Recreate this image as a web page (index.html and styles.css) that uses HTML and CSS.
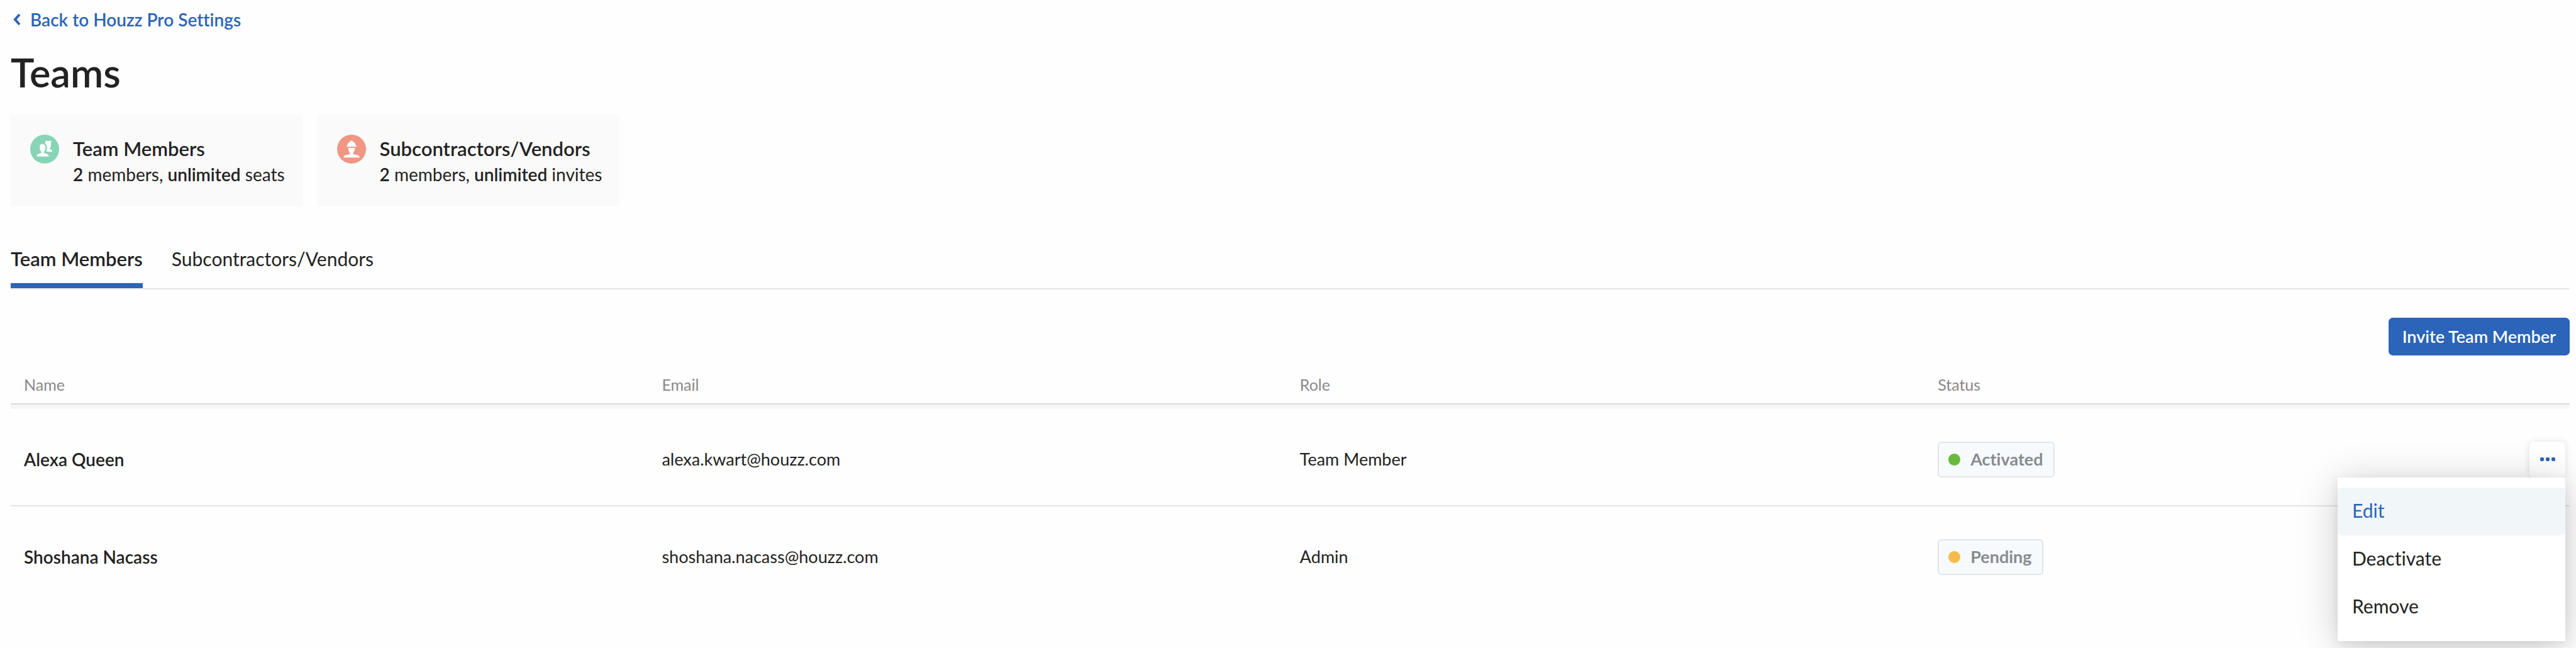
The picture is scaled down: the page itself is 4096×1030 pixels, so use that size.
FILE: index.html
```html
<!DOCTYPE html>
<html lang="en">
<head>
<meta charset="utf-8">
<title>Teams</title>
<link rel="stylesheet" href="styles.css">
</head>
<body>
<main class="page">
  <a class="back" href="#">
    <svg class="back-icon" viewBox="0 0 12 20" aria-hidden="true"><path d="M10 2 3 10l7 8" fill="none" stroke="currentColor" stroke-width="4"/></svg>
    <span>Back to Houzz Pro Settings</span>
  </a>
  <h1 class="title">Teams</h1>

  <section class="cards">
    <article class="card">
      <svg class="card-icon" viewBox="0 0 48 48" aria-hidden="true">
        <circle cx="24" cy="24" r="24" fill="#88d4b6"/>
        <path fill="#fff" d="M25 12.500l1.500-2.500 3 .8 5-.8c.8 1.200 0 2.500-.2 4.500v4.500c-.3 2-1.700 3-1.800 4.200 0 1.200 1.200 1.800 4 2.300v3h-8.500c-.6-1.200-1-1.600-1.200-2.400 1.600-2.600 1.400-6.600.2-9-.6-1.200-1.800-2.200-2.200-2.600z"/>
        <path fill="#fff" d="M16 20c-.5-2 .3-3.500 1.500-3.200.8-1.600 3-1.200 4.500-.6 2 .2 3.600 1.600 3 4.300.6 3-.4 6-2 7.600-.6 1.500 0 2.700 2.400 3.300 3 .7 5 1.200 5.300 4.800H11c.3-3.600 2.200-4.100 5-4.800 2.300-.6 2.800-1.800 2.200-3.300C16.500 26.500 15.500 23 16 20z"/>
      </svg>
      <div class="card-text">
        <h2 class="card-title">Team Members</h2>
        <p class="card-sub"><b>2</b> members, <b>unlimited</b> seats</p>
      </div>
    </article>
    <article class="card">
      <svg class="card-icon" viewBox="0 0 48 48" aria-hidden="true">
        <circle cx="24" cy="24" r="24" fill="#f09683"/>
        <path fill="#fff" d="M17 18.500c0-3.500 2-6 5-6.700V10h4v1.800c3 .7 5 3.200 5 6.700h1.500V20h-17v-1.500z"/>
        <path fill="#fff" d="M18.500 21.800h11c.2 3.400-.9 6.200-2.700 7.700-.5 2 .2 3 2.700 3.500 4 .7 7.700 1.200 8 5H10.500c.3-3.800 4-4.300 8-5 2.500-.5 3.200-1.500 2.700-3.500-1.800-1.500-2.900-4.300-2.700-7.700z"/>
      </svg>
      <div class="card-text">
        <h2 class="card-title">Subcontractors/Vendors</h2>
        <p class="card-sub"><b>2</b> members, <b>unlimited</b> invites</p>
      </div>
    </article>
  </section>

  <nav class="tabs">
    <a class="tab tab-active" href="#">Team Members</a>
    <a class="tab" href="#">Subcontractors/Vendors</a>
  </nav>

  <div class="toolbar"><button class="invite" type="button">Invite Team Member</button></div>

  <table class="members">
    <colgroup><col class="col-main"><col class="col-main"><col class="col-main"><col class="col-status"><col></colgroup>
    <thead>
      <tr><th scope="col">Name</th><th scope="col">Email</th><th scope="col">Role</th><th scope="col">Status</th><th></th></tr>
    </thead>
    <tbody>
      <tr>
        <td class="name">Alexa Queen</td>
        <td>alexa.kwart@houzz.com</td>
        <td>Team Member</td>
        <td><span class="badge"><i class="dot dot-green"></i>Activated</span></td>
        <td class="actions">
          <div class="more-wrap">
            <button class="more" type="button" aria-label="More actions" aria-expanded="true">
              <svg class="more-icon" viewBox="0 0 24 6" aria-hidden="true"><g fill="currentColor"><rect width="6" height="6" x="0" y="0" rx="2"/><rect width="6" height="6" x="9" y="0" rx="2"/><rect width="6" height="6" x="18" y="0" rx="2"/></g></svg>
            </button>
            <div class="menu" role="menu">
              <button class="menu-item menu-item-active" type="button" role="menuitem">Edit</button>
              <button class="menu-item" type="button" role="menuitem">Deactivate</button>
              <button class="menu-item" type="button" role="menuitem">Remove</button>
            </div>
          </div>
        </td>
      </tr>
      <tr>
        <td class="name">Shoshana Nacass</td>
        <td>shoshana.nacass@houzz.com</td>
        <td>Admin</td>
        <td><span class="badge"><i class="dot dot-yellow"></i>Pending</span></td>
        <td></td>
      </tr>
    </tbody>
  </table>
</main>
</body>
</html>
```

FILE: styles.css
```css
* {
  box-sizing: border-box;
}

body {
  margin: 0;
  background: #fefefe;
  color: #222;
  font-family: Lato, "Liberation Sans", sans-serif;
  font-size: 27px;
  font-variant-ligatures: none;
  line-height: 40px;
}

button {
  font-family: inherit;
  font-variant-ligatures: inherit;
  border: 0;
  cursor: pointer;
}

.page {
  min-height: 100vh;
  padding: 13px 10px 0 17px;
}

.back {
  display: flex;
  align-items: center;
  gap: 15px;
  width: fit-content;
  padding-left: 4px;
  color: #2b64b8;
  font-size: 28px;
  font-weight: 600;
  line-height: 36px;
  text-decoration: none;
}

.back-icon {
  width: 12px;
  height: 20px;
}

.title {
  margin: 30px 0 32px;
  font-size: 63px;
  font-weight: 600;
  line-height: 72px;
}

.cards {
  display: flex;
  gap: 24px;
}

.card {
  display: flex;
  gap: 22px;
  padding: 31px 28px 30px 31px;
  background: #fafafa;
}

.card-icon {
  width: 46px;
  height: 46px;
}

.card-text {
  padding-top: 2px;
}

.card-title {
  margin: 0;
  font-size: 31px;
  font-weight: 600;
  line-height: 40px;
}

.card-sub {
  margin: 0;
  font-size: 28px;
  line-height: 42px;
}

.card-sub b {
  font-weight: 600;
}

.tabs {
  display: flex;
  gap: 46px;
  margin-top: 63px;
  border-bottom: 2px solid #e6e6e6;
}

.tab {
  padding-bottom: 19px;
  border-bottom: 8px solid transparent;
  color: inherit;
  font-size: 30px;
  text-decoration: none;
}

.tab-active {
  border-bottom-color: #2b64b8;
  font-size: 31px;
  font-weight: 600;
}

.toolbar {
  display: flex;
  justify-content: flex-end;
  margin-top: 45px;
}

.invite {
  height: 60px;
  padding: 0 22px 2px;
  border-radius: 7px;
  background: #2b64b8;
  color: #fff;
  font-size: 27px;
  font-weight: 600;
}

.members {
  width: 100%;
  border-spacing: 0;
  table-layout: fixed;
}

.col-main {
  width: 24.93%;
}

.col-status {
  width: 20%;
}

.members th {
  padding: 28px 21px 12px;
  border-bottom: 2px solid #dcdcdc;
  box-shadow: 0 7px 0 #f6f6f6;
  color: #888;
  font-size: 25px;
  font-weight: 400;
  line-height: 36px;
  text-align: left;
}

.members td {
  height: 160px;
  padding: 0 21px;
}

.members tbody tr:first-child td {
  height: 162px;
  padding-top: 14px;
  border-bottom: 2px solid #e4e4e4;
}

.members .name {
  font-size: 28px;
  font-weight: 600;
}

.badge {
  display: flex;
  align-items: center;
  gap: 16px;
  width: fit-content;
  height: 57px;
  padding: 0 16px 0 15px;
  border: 2px solid #e2e5e6;
  border-radius: 6px;
  background: #f6fafd;
  color: #888b8d;
  font-weight: 700;
}

.dot {
  width: 19px;
  height: 19px;
  border-radius: 50%;
}

.dot-green {
  background: #67ba3b;
}

.dot-yellow {
  background: #f5bc49;
}

.members .actions {
  padding-right: 7px;
}

.more-wrap {
  position: relative;
  width: 57px;
  margin-left: auto;
}

.more {
  display: flex;
  align-items: center;
  justify-content: center;
  width: 57px;
  height: 57px;
  padding: 0;
  border-radius: 7px;
  background: #fff;
  box-shadow: 0 0 12px rgba(0, 0, 0, 0.12);
  color: #2b64b8;
}

.more-icon {
  width: 24px;
  height: 6px;
}

.menu {
  position: absolute;
  top: 100%;
  right: 0;
  width: 362px;
  padding: 16px 0;
  background: #fff;
  box-shadow: 0 8px 60px rgba(0, 0, 0, 0.2), 0 4px 16px rgba(0, 0, 0, 0.08);
}

.menu-item {
  display: block;
  width: 100%;
  height: 76px;
  padding: 0 23px 3px;
  border-radius: 6px;
  background: none;
  color: #222;
  font-size: 30px;
  text-align: left;
}

.menu-item-active {
  background: #f1f6f9;
  color: #2b64b8;
}
```
